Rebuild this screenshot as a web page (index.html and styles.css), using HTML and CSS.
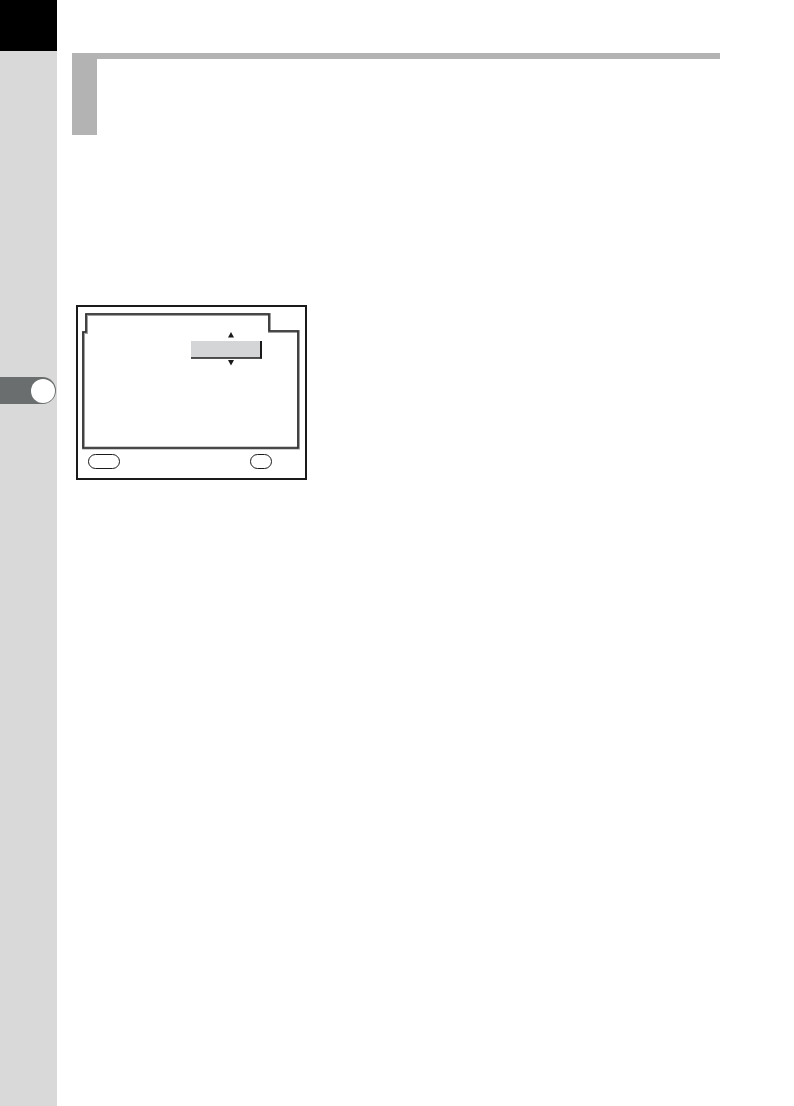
FILE: index.html
```html
<!DOCTYPE html>
<html lang="en">
<head>
<meta charset="utf-8">
<title>Page</title>
<link rel="stylesheet" href="styles.css">
</head>
<body>
<div class="page">
  <aside class="sidebar">
    <div class="corner"></div>
    <div class="strip">
      <div class="tab"><span class="dot"></span></div>
    </div>
  </aside>
  <main class="content">
    <header class="heading">
      <div class="heading-block"></div>
    </header>
    <div class="frame">
      <svg class="screen" width="227" height="171" viewBox="0 0 227 171" xmlns="http://www.w3.org/2000/svg">
        <polygon points="5.5,141 5.5,25.5 8.5,25.5 8.5,7.5 191.5,7.5 191.5,24.5 220.5,24.5 220.5,141" fill="none" stroke="#a0a0a0" stroke-width="3"/>
        <polygon points="5,141 5,25 8,25 8,7 191,7 191,24 220,24 220,141" fill="none" stroke="#2b2b2b" stroke-width="1.6"/>
        <rect x="113" y="34" width="70" height="17" fill="#d3d5d6"/>
        <line x1="113" y1="51" x2="184" y2="51" stroke="#1a1a1a" stroke-width="1.6"/>
        <line x1="183" y1="34" x2="183" y2="51.5" stroke="#1a1a1a" stroke-width="2"/>
        <polygon points="150,30.5 156,30.5 153,25" fill="#1a1a1a"/>
        <polygon points="150,53 156,53 153,58.5" fill="#1a1a1a"/>
        <rect x="10.5" y="147.5" width="31" height="14" rx="7" fill="none" stroke="#1a1a1a" stroke-width="1"/>
        <rect x="172.5" y="147.5" width="21" height="14" rx="7" fill="none" stroke="#1a1a1a" stroke-width="1"/>
      </svg>
    </div>
  </main>
</div>
</body>
</html>
```
FILE: styles.css
```css
html, body {
  margin: 0;
  padding: 0;
  background: #ffffff;
  font-family: "Liberation Sans", Arial, sans-serif;
}

.page {
  display: flex;
  min-height: 1106px;
}

.sidebar {
  width: 57px;
  flex: 0 0 57px;
  display: flex;
  flex-direction: column;
}

.corner {
  height: 51px;
  background: #000000;
}

.strip {
  flex: 1;
  background: #d9d9d9;
  padding-top: 326px;
}

.tab {
  width: 56px;
  height: 27px;
  background: #6b6e6e;
  border-radius: 0 14px 14px 0;
  display: flex;
  align-items: center;
  justify-content: flex-end;
  padding-right: 1px;
  box-sizing: border-box;
}

.dot {
  width: 24px;
  height: 24px;
  border-radius: 50%;
  background: #ffffff;
}

.content {
  flex: 1;
  padding-top: 53px;
}

.heading {
  margin-left: 15px;
  width: 648px;
  border-top: 6px solid #b3b3b3;
}

.heading-block {
  width: 25px;
  height: 76px;
  background: #b3b3b3;
}

.frame {
  margin-top: 170px;
  margin-left: 19px;
  width: 227px;
  height: 171px;
  border: 2px solid #1a1a1a;
}

.screen {
  display: block;
}
```
